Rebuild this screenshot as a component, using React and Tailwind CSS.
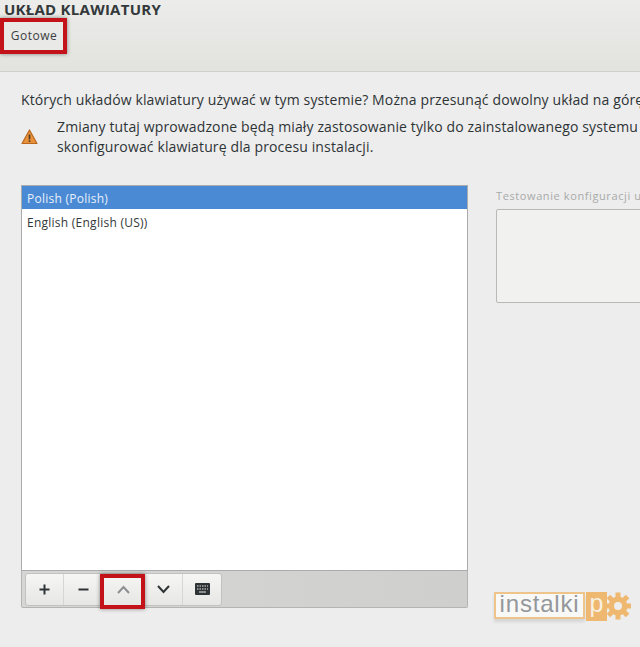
import React from "react";

const font = { fontFamily: '"Open Sans", "Noto Sans", sans-serif' };

function Warn() {
  return (
    <svg width="17" height="16" viewBox="0 0 17 16" className="shrink-0">
      <path d="M8.500 1 L16 14.500 H1 Z" fill="#e8913a" stroke="#b8691f" strokeWidth="1.2" strokeLinejoin="round" />
      <rect x="7.700" y="5.500" width="1.600" height="5" fill="#4a3a28" />
      <rect x="7.700" y="11.400" width="1.600" height="1.600" fill="#4a3a28" />
    </svg>
  );
}

function ToolBtn({ children, last, dim, className }) {
  return (
    <div className={`h-[31px] flex items-center justify-center ${last ? "" : "border-r border-[#d6d6d4]"} ${className}`}>
      <span className={`flex ${dim ? "opacity-50" : ""}`}>{children}</span>
    </div>
  );
}

function Logo() {
  return (
    <div className="flex items-start">
      <div className="w-[91px] h-[27px] border-2 border-[#efc48a] bg-[#f8f8f6] flex items-center justify-center text-[#94979b] text-[24px] leading-none tracking-[0.8px] pb-[3px] shadow-[0_3px_3px_rgba(0,0,0,0.1)]" style={{ fontFamily: '"Liberation Sans", sans-serif' }}>
        instalki
      </div>
      <div className="ml-[1px] w-[21px] h-[29px] bg-[#efb870] flex items-start justify-center text-[#f8f0e0] text-[25px] leading-[23px]" style={{ fontFamily: '"Liberation Sans", sans-serif' }}>
        p
      </div>
      <svg width="25" height="29" viewBox="0 0 25 29" className="-ml-[1px]">
        <g fill="#efb870">
          <circle cx="12" cy="14" r="9.500" />
          {[0, 45, 90, 135, 180, 225, 270, 315].map((a) => (
            <rect key={a} x="9.500" y="0.500" width="5" height="6" transform={`rotate(${a} 12 14)`} />
          ))}
        </g>
        <circle cx="12" cy="14" r="4" fill="#eeeeec" />
      </svg>
    </div>
  );
}

export default function App() {
  return (
    <div className="relative w-[640px] h-[647px] overflow-hidden bg-[#ededed] text-[#2e3436]" style={font}>
      <header className="h-[72px] border-b border-[#cfcfcb] bg-gradient-to-b from-[#ececea] to-[#e2e3df] pl-[4px]">
        <h1 className="text-[15px] leading-[18px] font-bold tracking-[0.25px] text-[#33383a] whitespace-nowrap">UKŁAD KLAWIATURY</h1>
        <div className="mt-[4px] ml-[1px] w-[58px] h-[29px] border-b border-[#b9b9b5] bg-[#e9e9e7] flex items-center justify-center text-[12px] tracking-[0.5px] text-[#3b3f41]">
          Gotowe
        </div>
      </header>

      <main className="pl-[21px]">
        <p className="mt-[18px] text-[14px] leading-[20px] whitespace-nowrap tracking-[0.13px]">
          Których układów klawiatury używać w tym systemie? Można przesunąć dowolny układ na górę
        </p>
        <div className="mt-[7px] flex items-center">
          <Warn />
          <div className="ml-[19px] text-[14px] leading-[20px] whitespace-nowrap tracking-[0.13px]">
            <p>Zmiany tutaj wprowadzone będą miały zastosowanie tylko do zainstalowanego systemu</p>
            <p>skonfigurować klawiaturę dla procesu instalacji.</p>
          </div>
        </div>

        <div className="mt-[28px] flex items-start">
          <div className="w-[447px] shrink-0">
            <div className="h-[386px] border border-[#a9acad] bg-white text-[12px] tracking-[0.25px]">
              <div className="h-[23px] pt-[2px] bg-[#4a8ad4] text-[#e8f0fa] flex items-center pl-[5px]">Polish (Polish)</div>
              <div className="h-[26px] pt-[2px] flex items-center pl-[5px] text-[#33383a]">English (English (US))</div>
            </div>
            <div className="h-[37px] border border-t-0 border-[#b4b4b2] rounded-b-[2px] bg-gradient-to-r from-[#d6d6d4] to-[#cfcfcd] flex items-center pl-[3px]">
              <div className="flex rounded-[3px] border border-[#c2c2c0] bg-gradient-to-b from-[#f6f6f5] to-[#e6e6e4]">
                <ToolBtn className="w-[38px]">
                  <svg width="11" height="11" viewBox="0 0 11 11"><path d="M5.500 0.500v10M0.500 5.500h10" stroke="#2e3436" strokeWidth="2" /></svg>
                </ToolBtn>
                <ToolBtn className="w-[39px]">
                  <svg width="11" height="11" viewBox="0 0 11 11"><path d="M0.500 5.500h10" stroke="#2e3436" strokeWidth="2" /></svg>
                </ToolBtn>
                <ToolBtn dim className="w-[41px]">
                  <svg width="13" height="9" viewBox="0 0 13 9"><path d="M1 8l5.500-6 5.500 6" fill="none" stroke="#2e3436" strokeWidth="2" /></svg>
                </ToolBtn>
                <ToolBtn className="w-[39px]">
                  <svg width="13" height="9" viewBox="0 0 13 9"><path d="M1 1l5.500 6 5.500-6" fill="none" stroke="#2e3436" strokeWidth="2" /></svg>
                </ToolBtn>
                <ToolBtn last className="w-[38px]">
                  <svg width="15" height="12" viewBox="0 0 15 12">
                    <rect width="15" height="12" rx="1" fill="#2e3436" />
                    <path d="M2 3h11M2 6h11" stroke="#e8e8e6" strokeWidth="1" strokeDasharray="1.500 1" />
                    <path d="M4 9h7" stroke="#e8e8e6" strokeWidth="1" />
                  </svg>
                </ToolBtn>
              </div>
            </div>
          </div>

          <div className="ml-[28px] flex-1 -mr-[40px]">
            <p className="h-[24px] pt-[3px] text-[11px] leading-[16px] tracking-[0.6px] text-[#a8aaaa] whitespace-nowrap">Testowanie konfiguracji układu</p>
            <div className="h-[94px] border border-[#b9b9b7] rounded-[2px] bg-[#f1f1f0]" />
          </div>
        </div>
      </main>

      <div className="absolute left-[494px] top-[592px]"><Logo /></div>

      <div className="absolute left-0 top-[18px] w-[67px] h-[36px] border-[4px] border-[#c4121b] shadow-[0_0_4px_rgba(0,0,0,0.45)]" />
      <div className="absolute left-[100px] top-[574px] w-[45px] h-[35px] border-[4px] border-[#c4121b] shadow-[0_0_4px_rgba(0,0,0,0.45)]" />
    </div>
  );
}
